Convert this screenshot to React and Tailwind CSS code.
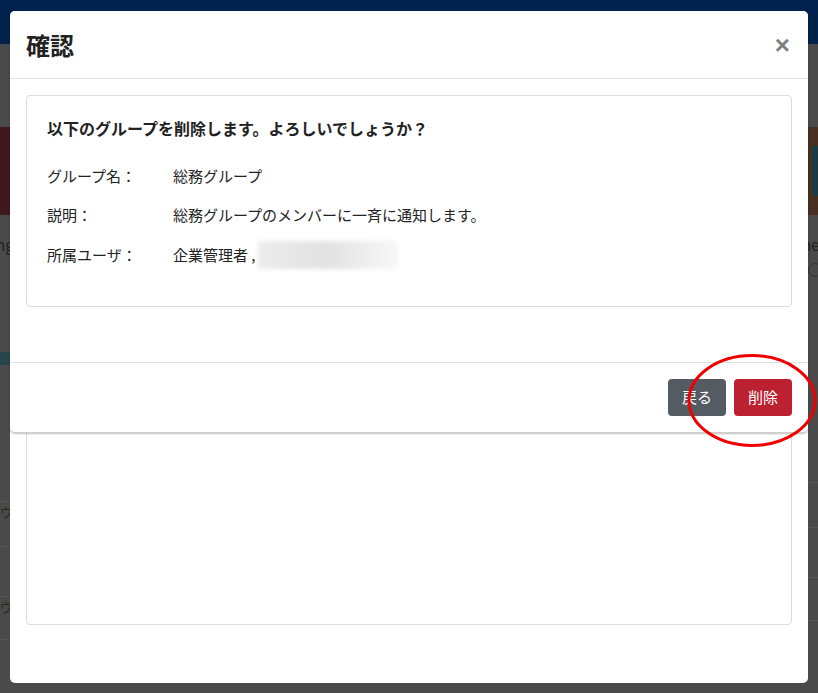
import React from 'react';

const font = { fontFamily: '"Noto Sans CJK JP", "Noto Sans", sans-serif' };

const rows = [
  { label: 'グループ名：', value: '総務グループ' },
  { label: '説明：', value: '総務グループのメンバーに一斉に通知します。' },
];

const App = () => {
  return (
    <div className="relative w-[818px] h-[693px] overflow-hidden bg-[#4a4a4a]" style={font}>
      {/* page behind the backdrop (already dimmed) */}
      <div className="h-[44px] bg-[#00214b]" />
      <div className="flex justify-between">
        <div className="w-[10px]">
          <div className="h-[83px]" />
          <div className="h-[88px] w-[10px] bg-[#3f1a1d]" />
          <div className="mt-[19px] -ml-[4px] text-[15px] text-[#1e1e1e] whitespace-nowrap">ng</div>
          <div className="h-[95px]" />
          <div className="h-[13px] bg-[#27444a]" />
          <div className="h-[136px]" />
          <div className="h-[45px] w-[10px] border-t border-[#555] text-[13px] text-[#262626] whitespace-nowrap">ヴ</div>
          <div className="h-[50px] w-[10px] border-t border-[#555]" />
          <div className="h-[44px] w-[10px] border-t border-b border-[#555] text-[13px] text-[#262626] whitespace-nowrap">ヴ</div>
        </div>
        <div className="w-[10px]">
          <div className="h-[83px]" />
          <div className="h-[88px] w-[10px] bg-[#47301f] flex items-center">
            <div className="h-[50px] w-[6px] ml-auto bg-[#1c3a44]" />
          </div>
          <div className="mt-[19px] -ml-[6px] text-[15px] text-[#1e1e1e] whitespace-nowrap">ne</div>
          <div className="mt-[6px] w-[14px] h-[14px] rounded-full border border-[#333]" />
          <div className="h-[205px]" />
          <div className="h-[45px] border-t border-[#555]" />
          <div className="h-[50px] border-t border-[#555]" />
          <div className="h-[44px] border-t border-b border-[#555]" />
        </div>
      </div>

      {/* modal layer */}
      <div className="absolute inset-0">
        {/* back modal */}
        <div className="mx-[10px] mt-[11px] h-[672px] bg-white rounded-[5px] px-4 pt-[85px]">
          <div className="h-[529px] border border-[#dcdcdc] rounded-[4px]" />
        </div>

        {/* front modal */}
        <div className="absolute top-[11px] left-[10px] w-[798px] bg-white rounded-[5px] shadow-[0_1px_2px_rgba(0,0,0,0.25)] border-b border-[#cfcfcf]">
          <div className="h-[68px] flex items-center justify-between px-4 border-b border-[#dee2e6]">
            <h1 className="text-[24px] font-bold text-[#222]">確認</h1>
            <span
              className="text-[26px] font-bold leading-none text-[#808080] mr-[2px]"
              style={{ fontFamily: '"Liberation Sans", Arial, sans-serif' }}
            >
              ×
            </span>
          </div>
          <div className="px-4 pt-4 pb-[55px]">
            <div className="border border-[#dcdcdc] rounded-[4px] px-5 pt-[20px] pb-[40px] text-[#222]">
              <p className="text-[16px] font-bold leading-[24px]">以下のグループを削除します。よろしいでしょうか？</p>
              <div className="mt-[24px] flex flex-col gap-[16px] text-[15px] leading-[23px]">
                {rows.map((r) => (
                  <div key={r.label} className="flex h-[23px]">
                    <span className="w-[126px]">{r.label}</span>
                    <span>{r.value}</span>
                  </div>
                ))}
                <div className="flex items-center h-[23px] mt-[1px]">
                  <span className="w-[126px]">所属ユーザ：</span>
                  <span>企業管理者 ,</span>
                  <span className="ml-[2px] inline-block w-[140px] h-[28px] bg-gradient-to-r from-[#ececec] via-[#e2e2e2] to-[#f8f8f8] blur-[2px]" />
                </div>
              </div>
            </div>
          </div>
          <div className="h-[70px] border-t border-[#dee2e6] flex items-center justify-end gap-2 px-4">
            <button className="w-[58px] h-[37px] rounded-[4px] bg-[#545b62] text-white text-[15px]">戻る</button>
            <button className="w-[58px] h-[37px] rounded-[4px] bg-[#bc2132] text-white text-[15px]">削除</button>
          </div>
        </div>

        {/* red annotation ring */}
        <svg className="absolute left-[686px] top-[353px]" width="132" height="95" viewBox="0 0 132 95">
          <ellipse cx="66" cy="47.5" rx="63" ry="45" fill="none" stroke="#f00000" strokeWidth="3" />
        </svg>
      </div>
    </div>
  );
};

export default App;
